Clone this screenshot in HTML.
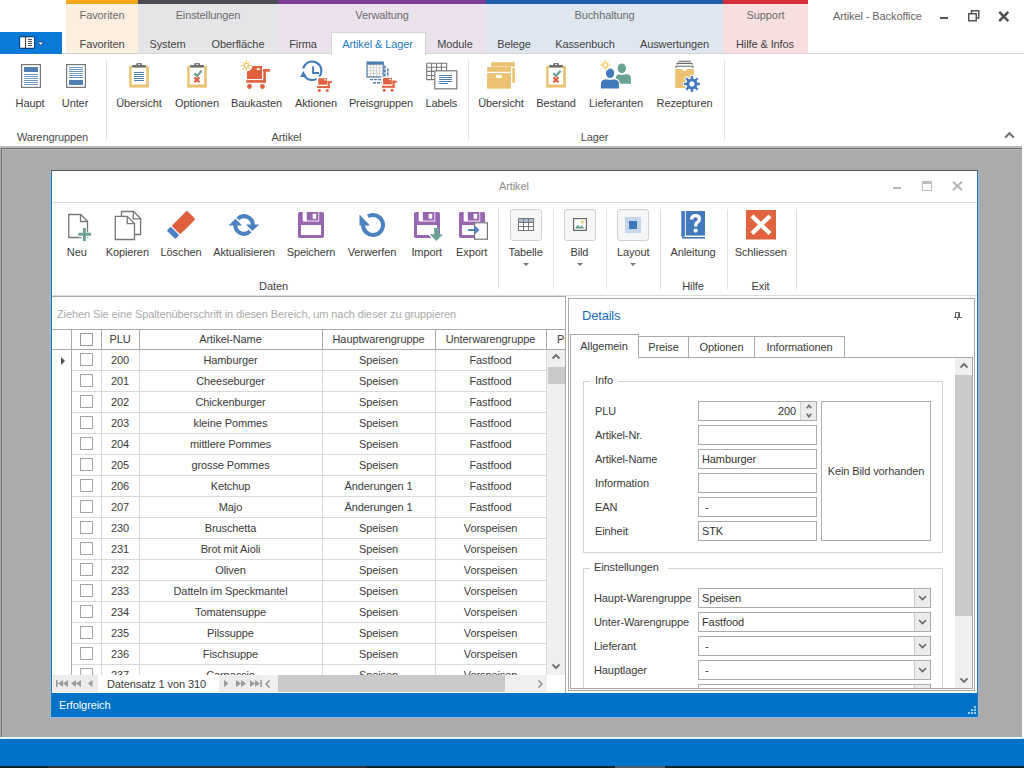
<!DOCTYPE html>
<html><head><meta charset="utf-8"><style>
html,body{margin:0;padding:0;}
body{width:1024px;height:768px;overflow:hidden;position:relative;background:#fff;font-family:"Liberation Sans",sans-serif;font-size:11px;color:#3b3b3b;}
.t{position:absolute;white-space:nowrap;line-height:13px;letter-spacing:-0.1px;}
.b{position:absolute;box-sizing:border-box;}
svg.b{overflow:visible;}
</style></head><body>
<div class="b" style="left:66px;top:0px;width:72px;height:54px;background:#fcefdf"></div>
<div class="b" style="left:66px;top:0px;width:72px;height:4px;background:#f5a41c"></div>
<div class="t" style="left:22.0px;width:160px;top:9px;text-align:center;color:#6b6b6b;">Favoriten</div>
<div class="b" style="left:138px;top:0px;width:140px;height:54px;background:#e5e5e7"></div>
<div class="b" style="left:138px;top:0px;width:140px;height:4px;background:#4a4a54"></div>
<div class="t" style="left:128.0px;width:160px;top:9px;text-align:center;color:#6b6b6b;">Einstellungen</div>
<div class="b" style="left:278px;top:0px;width:208px;height:54px;background:#ece2ee"></div>
<div class="b" style="left:278px;top:0px;width:208px;height:4px;background:#7c3d95"></div>
<div class="t" style="left:302.0px;width:160px;top:9px;text-align:center;color:#6b6b6b;">Verwaltung</div>
<div class="b" style="left:486px;top:0px;width:237px;height:54px;background:#dee7f0"></div>
<div class="b" style="left:486px;top:0px;width:237px;height:4px;background:#1e5ea8"></div>
<div class="t" style="left:524.5px;width:160px;top:9px;text-align:center;color:#6b6b6b;">Buchhaltung</div>
<div class="b" style="left:723px;top:0px;width:85px;height:54px;background:#f7dfdf"></div>
<div class="b" style="left:723px;top:0px;width:85px;height:4px;background:#d12f3a"></div>
<div class="t" style="left:685.5px;width:160px;top:9px;text-align:center;color:#6b6b6b;">Support</div>
<div class="b" style="left:0px;top:53px;width:1024px;height:1px;background:#d4d4d4"></div>
<div class="b" style="left:0px;top:32px;width:62px;height:22px;background:#0b7ad8"></div>
<svg class="b" style="left:19px;top:36px" width="26" height="14" viewBox="0 0 26 14"><rect x="0.6" y="0.6" width="15" height="11.8" rx="1.5" fill="#fff" stroke="#0b3f80" stroke-width="1.1"/><path d="M6.5 1V12" stroke="#444" stroke-width="1.1"/><path d="M9 3.4h4M9 5.4h4M9 7.4h4M9 9.4h4" stroke="#444" stroke-width="1"/><path d="M18.6 5.9h6.2l-3.1 3.7z" fill="#fff" stroke="#0b3f80" stroke-width="0.9"/></svg>
<div class="b" style="left:331px;top:32px;width:95px;height:23px;background:#fff;border:1px solid #d4d4d4;border-bottom:none"></div>
<div class="t" style="left:22.0px;width:160px;top:38px;text-align:center;color:#444;">Favoriten</div>
<div class="t" style="left:87.5px;width:160px;top:38px;text-align:center;color:#444;">System</div>
<div class="t" style="left:158.0px;width:160px;top:38px;text-align:center;color:#444;">Oberfläche</div>
<div class="t" style="left:223.0px;width:160px;top:38px;text-align:center;color:#444;">Firma</div>
<div class="t" style="left:297.5px;width:160px;top:38px;text-align:center;color:#1d78c1;">Artikel &amp; Lager</div>
<div class="t" style="left:375.0px;width:160px;top:38px;text-align:center;color:#444;">Module</div>
<div class="t" style="left:434.0px;width:160px;top:38px;text-align:center;color:#444;">Belege</div>
<div class="t" style="left:505.0px;width:160px;top:38px;text-align:center;color:#444;">Kassenbuch</div>
<div class="t" style="left:594.5px;width:160px;top:38px;text-align:center;color:#444;">Auswertungen</div>
<div class="t" style="left:685.0px;width:160px;top:38px;text-align:center;color:#444;">Hilfe &amp; Infos</div>
<div class="t" style="left:833px;top:10px;color:#666;">Artikel - Backoffice</div>
<div class="b" style="left:940px;top:17px;width:8px;height:2px;background:#555"></div>
<svg class="b" style="left:968px;top:10px" width="12" height="12" viewBox="0 0 12 12"><rect x="0.75" y="3.75" width="7.5" height="7" fill="none" stroke="#555" stroke-width="1.5"/><path d="M3.5 3.5V0.75H10.75V8H8.5" fill="none" stroke="#555" stroke-width="1.5"/></svg>
<svg class="b" style="left:998px;top:11px" width="12" height="11" viewBox="0 0 12 11"><path d="M1.2 0.8L10.3 10.2M10.3 0.8L1.2 10.2" stroke="#4e4e4e" stroke-width="2.4"/></svg>
<div class="b" style="left:106px;top:60px;width:1px;height:80px;background:#e2e2e2"></div>
<div class="b" style="left:468px;top:60px;width:1px;height:80px;background:#e2e2e2"></div>
<div class="b" style="left:724px;top:60px;width:1px;height:80px;background:#e2e2e2"></div>
<div class="t" style="left:-50.0px;width:160px;top:97px;text-align:center;color:#3c3c3c;">Haupt</div>
<div class="t" style="left:-5.0px;width:160px;top:97px;text-align:center;color:#3c3c3c;">Unter</div>
<div class="t" style="left:59.0px;width:160px;top:97px;text-align:center;color:#3c3c3c;">Übersicht</div>
<div class="t" style="left:117.0px;width:160px;top:97px;text-align:center;color:#3c3c3c;">Optionen</div>
<div class="t" style="left:176.5px;width:160px;top:97px;text-align:center;color:#3c3c3c;">Baukasten</div>
<div class="t" style="left:236.0px;width:160px;top:97px;text-align:center;color:#3c3c3c;">Aktionen</div>
<div class="t" style="left:301.0px;width:160px;top:97px;text-align:center;color:#3c3c3c;">Preisgruppen</div>
<div class="t" style="left:361.3px;width:160px;top:97px;text-align:center;color:#3c3c3c;">Labels</div>
<div class="t" style="left:421.0px;width:160px;top:97px;text-align:center;color:#3c3c3c;">Übersicht</div>
<div class="t" style="left:476.0px;width:160px;top:97px;text-align:center;color:#3c3c3c;">Bestand</div>
<div class="t" style="left:536.0px;width:160px;top:97px;text-align:center;color:#3c3c3c;">Lieferanten</div>
<div class="t" style="left:604.5px;width:160px;top:97px;text-align:center;color:#3c3c3c;">Rezepturen</div>
<div class="t" style="left:-27.5px;width:160px;top:131px;text-align:center;color:#4a4a4a;">Warengruppen</div>
<div class="t" style="left:206.5px;width:160px;top:131px;text-align:center;color:#4a4a4a;">Artikel</div>
<div class="t" style="left:514.5px;width:160px;top:131px;text-align:center;color:#4a4a4a;">Lager</div>
<svg class="b" style="left:1004px;top:131px" width="11" height="8" viewBox="0 0 11 8"><path d="M1.2 6.5L5.5 2.2L9.8 6.5" fill="none" stroke="#6e6e6e" stroke-width="2"/></svg>
<div class="b" style="left:0px;top:146px;width:1022px;height:591px;background:#ababab"></div>
<div class="b" style="left:0px;top:146px;width:1022px;height:2px;background:#bababa"></div>
<div class="b" style="left:1px;top:148px;width:1021px;height:1px;background:#6b6b6b"></div>
<div class="b" style="left:1px;top:148px;width:1px;height:589px;background:#6b6b6b"></div>
<div class="b" style="left:2px;top:149px;width:1020px;height:1px;background:#b6b6b6"></div>
<div class="b" style="left:2px;top:149px;width:1px;height:588px;background:#b6b6b6"></div>
<div class="b" style="left:0px;top:737px;width:1024px;height:2px;background:#e8f4fc"></div>
<div class="b" style="left:0px;top:739px;width:1024px;height:27px;background:#0072c8"></div>
<div class="b" style="left:0px;top:766px;width:1024px;height:2px;background:#17212b"></div>
<div class="b" style="left:48px;top:766px;width:318px;height:2px;background:#2c3136"></div>
<div class="b" style="left:615px;top:766px;width:50px;height:2px;background:#4c5b68"></div>
<div class="b" style="left:51px;top:170px;width:927px;height:547px;background:#fff;border:1px solid #2f6fa3;border-top-color:#555"></div>
<div class="b" style="left:50px;top:171px;width:1px;height:547px;background:#8dbde3"></div>
<div class="b" style="left:978px;top:171px;width:1px;height:547px;background:#8dbde3"></div>
<div class="b" style="left:50px;top:717px;width:929px;height:1px;background:#8dbde3"></div>
<div class="t" style="left:499px;top:180px;color:#8c8c8c;">Artikel</div>
<div class="b" style="left:893px;top:187px;width:8px;height:2px;background:#b8b8b8"></div>
<div class="b" style="left:922px;top:181px;width:10px;height:10px;border:1px solid #bdbdbd;border-top-width:3px"></div>
<svg class="b" style="left:952px;top:181px" width="11" height="10" viewBox="0 0 11 10"><path d="M1 0.8L10 9.2M10 0.8L1 9.2" stroke="#b5b5b5" stroke-width="2.1"/></svg>
<div class="b" style="left:52px;top:202px;width:925px;height:1px;background:#dadada"></div>
<div class="b" style="left:498px;top:209px;width:1px;height:80px;background:#e0e0e0"></div>
<div class="b" style="left:553px;top:209px;width:1px;height:80px;background:#e0e0e0"></div>
<div class="b" style="left:606px;top:209px;width:1px;height:80px;background:#e0e0e0"></div>
<div class="b" style="left:660px;top:209px;width:1px;height:80px;background:#e0e0e0"></div>
<div class="b" style="left:727px;top:209px;width:1px;height:80px;background:#e0e0e0"></div>
<div class="b" style="left:796px;top:209px;width:1px;height:80px;background:#e0e0e0"></div>
<div class="t" style="left:-3.200000000000003px;width:160px;top:246px;text-align:center;color:#3c3c3c;">Neu</div>
<div class="t" style="left:47.3px;width:160px;top:246px;text-align:center;color:#3c3c3c;">Kopieren</div>
<div class="t" style="left:101.0px;width:160px;top:246px;text-align:center;color:#3c3c3c;">Löschen</div>
<div class="t" style="left:164.0px;width:160px;top:246px;text-align:center;color:#3c3c3c;">Aktualisieren</div>
<div class="t" style="left:231.0px;width:160px;top:246px;text-align:center;color:#3c3c3c;">Speichern</div>
<div class="t" style="left:292.0px;width:160px;top:246px;text-align:center;color:#3c3c3c;">Verwerfen</div>
<div class="t" style="left:346.7px;width:160px;top:246px;text-align:center;color:#3c3c3c;">Import</div>
<div class="t" style="left:391.7px;width:160px;top:246px;text-align:center;color:#3c3c3c;">Export</div>
<div class="t" style="left:445.6px;width:160px;top:246px;text-align:center;color:#3c3c3c;">Tabelle</div>
<div class="t" style="left:499.4px;width:160px;top:246px;text-align:center;color:#3c3c3c;">Bild</div>
<div class="t" style="left:553.3px;width:160px;top:246px;text-align:center;color:#3c3c3c;">Layout</div>
<div class="t" style="left:613.0px;width:160px;top:246px;text-align:center;color:#3c3c3c;">Anleitung</div>
<div class="t" style="left:680.8px;width:160px;top:246px;text-align:center;color:#3c3c3c;">Schliessen</div>
<div class="t" style="left:193.5px;width:160px;top:280px;text-align:center;color:#3c3c3c;">Daten</div>
<div class="t" style="left:613.0px;width:160px;top:280px;text-align:center;color:#3c3c3c;">Hilfe</div>
<div class="t" style="left:680.5px;width:160px;top:280px;text-align:center;color:#3c3c3c;">Exit</div>
<div class="b" style="left:510px;top:209px;width:32px;height:32px;background:#f6f6f6;border:1px solid #d0d0d0;border-radius:3px"></div>
<div class="b" style="left:564px;top:209px;width:32px;height:32px;background:#f6f6f6;border:1px solid #d0d0d0;border-radius:3px"></div>
<div class="b" style="left:617px;top:209px;width:32px;height:32px;background:#f6f6f6;border:1px solid #d0d0d0;border-radius:3px"></div>
<svg class="b" style="left:522.5px;top:263px" width="6" height="3" viewBox="0 0 6 3"><path d="M0 0h6l-3 3z" fill="#777"/></svg>
<svg class="b" style="left:576.5px;top:263px" width="6" height="3" viewBox="0 0 6 3"><path d="M0 0h6l-3 3z" fill="#777"/></svg>
<svg class="b" style="left:630px;top:263px" width="6" height="3" viewBox="0 0 6 3"><path d="M0 0h6l-3 3z" fill="#777"/></svg>
<div class="b" style="left:52px;top:295px;width:925px;height:1px;background:#dcdcdc"></div>
<div class="b" style="left:52px;top:693px;width:925px;height:24px;background:#0072c8"></div>
<div class="t" style="left:59px;top:699px;color:#fff;">Erfolgreich</div>
<svg class="b" style="left:968px;top:706px" width="8" height="8" viewBox="0 0 8 8"><rect x="6" y="0" width="2" height="2" fill="#9fd3f5"/><rect x="3" y="3" width="2" height="2" fill="#9fd3f5"/><rect x="6" y="3" width="2" height="2" fill="#9fd3f5"/><rect x="0" y="6" width="2" height="2" fill="#9fd3f5"/><rect x="3" y="6" width="2" height="2" fill="#9fd3f5"/><rect x="6" y="6" width="2" height="2" fill="#9fd3f5"/></svg>
<div class="b" style="left:52px;top:296px;width:514px;height:397px;background:#fff"></div>
<div class="b" style="left:52px;top:296px;width:514px;height:1px;background:#a9a9a9"></div>
<div class="b" style="left:565px;top:296px;width:1px;height:397px;background:#a9a9a9"></div>
<div class="t" style="left:57px;top:308px;color:#a9a9a9;">Ziehen Sie eine Spaltenüberschrift in diesen Bereich, um nach dieser zu gruppieren</div>
<div class="b" style="left:52px;top:329px;width:513px;height:1px;background:#a9a9a9"></div>
<div class="b" style="left:52px;top:349px;width:513px;height:1px;background:#a9a9a9"></div>
<div class="b" style="left:71px;top:330px;width:1px;height:19px;background:#a9a9a9"></div>
<div class="b" style="left:101px;top:330px;width:1px;height:19px;background:#a9a9a9"></div>
<div class="b" style="left:139px;top:330px;width:1px;height:19px;background:#a9a9a9"></div>
<div class="b" style="left:322px;top:330px;width:1px;height:19px;background:#a9a9a9"></div>
<div class="b" style="left:435px;top:330px;width:1px;height:19px;background:#a9a9a9"></div>
<div class="b" style="left:546px;top:330px;width:1px;height:19px;background:#a9a9a9"></div>
<div class="t" style="left:40.0px;width:160px;top:333px;text-align:center;">PLU</div>
<div class="t" style="left:150.5px;width:160px;top:333px;text-align:center;">Artikel-Name</div>
<div class="t" style="left:298.5px;width:160px;top:333px;text-align:center;">Hauptwarengruppe</div>
<div class="t" style="left:410.5px;width:160px;top:333px;text-align:center;">Unterwarengruppe</div>
<div class="b" style="left:547px;top:330px;width:18px;height:19px;overflow:hidden"><div class="t" style="left:10px;top:3px">Preis</div></div>
<div class="b" style="left:80px;top:333px;width:13px;height:13px;border:1px solid #989898;background:#fff"></div>
<div class="b" style="left:52px;top:350px;width:495px;height:325px;overflow:hidden">
<div class="b" style="left:19px;top:0px;width:1px;height:325px;background:#a9a9a9"></div>
<div class="b" style="left:20px;top:20px;width:475px;height:1px;background:#d9d9d9"></div>
<div class="b" style="left:49px;top:0px;width:1px;height:21px;background:#d9d9d9"></div>
<div class="b" style="left:87px;top:0px;width:1px;height:21px;background:#d9d9d9"></div>
<div class="b" style="left:270px;top:0px;width:1px;height:21px;background:#d9d9d9"></div>
<div class="b" style="left:383px;top:0px;width:1px;height:21px;background:#d9d9d9"></div>
<div class="b" style="left:494px;top:0px;width:1px;height:21px;background:#d9d9d9"></div>
<div class="b" style="left:28px;top:3px;width:13px;height:13px;border:1px solid #a5a5a5;background:#fff"></div>
<div class="t" style="left:-12.0px;width:160px;top:4px;text-align:center;">200</div>
<div class="t" style="left:98.5px;width:160px;top:4px;text-align:center;">Hamburger</div>
<div class="t" style="left:246.5px;width:160px;top:4px;text-align:center;">Speisen</div>
<div class="t" style="left:358.5px;width:160px;top:4px;text-align:center;">Fastfood</div>
<div class="b" style="left:20px;top:41px;width:475px;height:1px;background:#d9d9d9"></div>
<div class="b" style="left:49px;top:21px;width:1px;height:21px;background:#d9d9d9"></div>
<div class="b" style="left:87px;top:21px;width:1px;height:21px;background:#d9d9d9"></div>
<div class="b" style="left:270px;top:21px;width:1px;height:21px;background:#d9d9d9"></div>
<div class="b" style="left:383px;top:21px;width:1px;height:21px;background:#d9d9d9"></div>
<div class="b" style="left:494px;top:21px;width:1px;height:21px;background:#d9d9d9"></div>
<div class="b" style="left:28px;top:24px;width:13px;height:13px;border:1px solid #a5a5a5;background:#fff"></div>
<div class="t" style="left:-12.0px;width:160px;top:25px;text-align:center;">201</div>
<div class="t" style="left:98.5px;width:160px;top:25px;text-align:center;">Cheeseburger</div>
<div class="t" style="left:246.5px;width:160px;top:25px;text-align:center;">Speisen</div>
<div class="t" style="left:358.5px;width:160px;top:25px;text-align:center;">Fastfood</div>
<div class="b" style="left:20px;top:62px;width:475px;height:1px;background:#d9d9d9"></div>
<div class="b" style="left:49px;top:42px;width:1px;height:21px;background:#d9d9d9"></div>
<div class="b" style="left:87px;top:42px;width:1px;height:21px;background:#d9d9d9"></div>
<div class="b" style="left:270px;top:42px;width:1px;height:21px;background:#d9d9d9"></div>
<div class="b" style="left:383px;top:42px;width:1px;height:21px;background:#d9d9d9"></div>
<div class="b" style="left:494px;top:42px;width:1px;height:21px;background:#d9d9d9"></div>
<div class="b" style="left:28px;top:45px;width:13px;height:13px;border:1px solid #a5a5a5;background:#fff"></div>
<div class="t" style="left:-12.0px;width:160px;top:46px;text-align:center;">202</div>
<div class="t" style="left:98.5px;width:160px;top:46px;text-align:center;">Chickenburger</div>
<div class="t" style="left:246.5px;width:160px;top:46px;text-align:center;">Speisen</div>
<div class="t" style="left:358.5px;width:160px;top:46px;text-align:center;">Fastfood</div>
<div class="b" style="left:20px;top:83px;width:475px;height:1px;background:#d9d9d9"></div>
<div class="b" style="left:49px;top:63px;width:1px;height:21px;background:#d9d9d9"></div>
<div class="b" style="left:87px;top:63px;width:1px;height:21px;background:#d9d9d9"></div>
<div class="b" style="left:270px;top:63px;width:1px;height:21px;background:#d9d9d9"></div>
<div class="b" style="left:383px;top:63px;width:1px;height:21px;background:#d9d9d9"></div>
<div class="b" style="left:494px;top:63px;width:1px;height:21px;background:#d9d9d9"></div>
<div class="b" style="left:28px;top:66px;width:13px;height:13px;border:1px solid #a5a5a5;background:#fff"></div>
<div class="t" style="left:-12.0px;width:160px;top:67px;text-align:center;">203</div>
<div class="t" style="left:98.5px;width:160px;top:67px;text-align:center;">kleine Pommes</div>
<div class="t" style="left:246.5px;width:160px;top:67px;text-align:center;">Speisen</div>
<div class="t" style="left:358.5px;width:160px;top:67px;text-align:center;">Fastfood</div>
<div class="b" style="left:20px;top:104px;width:475px;height:1px;background:#d9d9d9"></div>
<div class="b" style="left:49px;top:84px;width:1px;height:21px;background:#d9d9d9"></div>
<div class="b" style="left:87px;top:84px;width:1px;height:21px;background:#d9d9d9"></div>
<div class="b" style="left:270px;top:84px;width:1px;height:21px;background:#d9d9d9"></div>
<div class="b" style="left:383px;top:84px;width:1px;height:21px;background:#d9d9d9"></div>
<div class="b" style="left:494px;top:84px;width:1px;height:21px;background:#d9d9d9"></div>
<div class="b" style="left:28px;top:87px;width:13px;height:13px;border:1px solid #a5a5a5;background:#fff"></div>
<div class="t" style="left:-12.0px;width:160px;top:88px;text-align:center;">204</div>
<div class="t" style="left:98.5px;width:160px;top:88px;text-align:center;">mittlere Pommes</div>
<div class="t" style="left:246.5px;width:160px;top:88px;text-align:center;">Speisen</div>
<div class="t" style="left:358.5px;width:160px;top:88px;text-align:center;">Fastfood</div>
<div class="b" style="left:20px;top:125px;width:475px;height:1px;background:#d9d9d9"></div>
<div class="b" style="left:49px;top:105px;width:1px;height:21px;background:#d9d9d9"></div>
<div class="b" style="left:87px;top:105px;width:1px;height:21px;background:#d9d9d9"></div>
<div class="b" style="left:270px;top:105px;width:1px;height:21px;background:#d9d9d9"></div>
<div class="b" style="left:383px;top:105px;width:1px;height:21px;background:#d9d9d9"></div>
<div class="b" style="left:494px;top:105px;width:1px;height:21px;background:#d9d9d9"></div>
<div class="b" style="left:28px;top:108px;width:13px;height:13px;border:1px solid #a5a5a5;background:#fff"></div>
<div class="t" style="left:-12.0px;width:160px;top:109px;text-align:center;">205</div>
<div class="t" style="left:98.5px;width:160px;top:109px;text-align:center;">grosse Pommes</div>
<div class="t" style="left:246.5px;width:160px;top:109px;text-align:center;">Speisen</div>
<div class="t" style="left:358.5px;width:160px;top:109px;text-align:center;">Fastfood</div>
<div class="b" style="left:20px;top:146px;width:475px;height:1px;background:#d9d9d9"></div>
<div class="b" style="left:49px;top:126px;width:1px;height:21px;background:#d9d9d9"></div>
<div class="b" style="left:87px;top:126px;width:1px;height:21px;background:#d9d9d9"></div>
<div class="b" style="left:270px;top:126px;width:1px;height:21px;background:#d9d9d9"></div>
<div class="b" style="left:383px;top:126px;width:1px;height:21px;background:#d9d9d9"></div>
<div class="b" style="left:494px;top:126px;width:1px;height:21px;background:#d9d9d9"></div>
<div class="b" style="left:28px;top:129px;width:13px;height:13px;border:1px solid #a5a5a5;background:#fff"></div>
<div class="t" style="left:-12.0px;width:160px;top:130px;text-align:center;">206</div>
<div class="t" style="left:98.5px;width:160px;top:130px;text-align:center;">Ketchup</div>
<div class="t" style="left:246.5px;width:160px;top:130px;text-align:center;">Änderungen 1</div>
<div class="t" style="left:358.5px;width:160px;top:130px;text-align:center;">Fastfood</div>
<div class="b" style="left:20px;top:167px;width:475px;height:1px;background:#d9d9d9"></div>
<div class="b" style="left:49px;top:147px;width:1px;height:21px;background:#d9d9d9"></div>
<div class="b" style="left:87px;top:147px;width:1px;height:21px;background:#d9d9d9"></div>
<div class="b" style="left:270px;top:147px;width:1px;height:21px;background:#d9d9d9"></div>
<div class="b" style="left:383px;top:147px;width:1px;height:21px;background:#d9d9d9"></div>
<div class="b" style="left:494px;top:147px;width:1px;height:21px;background:#d9d9d9"></div>
<div class="b" style="left:28px;top:150px;width:13px;height:13px;border:1px solid #a5a5a5;background:#fff"></div>
<div class="t" style="left:-12.0px;width:160px;top:151px;text-align:center;">207</div>
<div class="t" style="left:98.5px;width:160px;top:151px;text-align:center;">Majo</div>
<div class="t" style="left:246.5px;width:160px;top:151px;text-align:center;">Änderungen 1</div>
<div class="t" style="left:358.5px;width:160px;top:151px;text-align:center;">Fastfood</div>
<div class="b" style="left:20px;top:188px;width:475px;height:1px;background:#d9d9d9"></div>
<div class="b" style="left:49px;top:168px;width:1px;height:21px;background:#d9d9d9"></div>
<div class="b" style="left:87px;top:168px;width:1px;height:21px;background:#d9d9d9"></div>
<div class="b" style="left:270px;top:168px;width:1px;height:21px;background:#d9d9d9"></div>
<div class="b" style="left:383px;top:168px;width:1px;height:21px;background:#d9d9d9"></div>
<div class="b" style="left:494px;top:168px;width:1px;height:21px;background:#d9d9d9"></div>
<div class="b" style="left:28px;top:171px;width:13px;height:13px;border:1px solid #a5a5a5;background:#fff"></div>
<div class="t" style="left:-12.0px;width:160px;top:172px;text-align:center;">230</div>
<div class="t" style="left:98.5px;width:160px;top:172px;text-align:center;">Bruschetta</div>
<div class="t" style="left:246.5px;width:160px;top:172px;text-align:center;">Speisen</div>
<div class="t" style="left:358.5px;width:160px;top:172px;text-align:center;">Vorspeisen</div>
<div class="b" style="left:20px;top:209px;width:475px;height:1px;background:#d9d9d9"></div>
<div class="b" style="left:49px;top:189px;width:1px;height:21px;background:#d9d9d9"></div>
<div class="b" style="left:87px;top:189px;width:1px;height:21px;background:#d9d9d9"></div>
<div class="b" style="left:270px;top:189px;width:1px;height:21px;background:#d9d9d9"></div>
<div class="b" style="left:383px;top:189px;width:1px;height:21px;background:#d9d9d9"></div>
<div class="b" style="left:494px;top:189px;width:1px;height:21px;background:#d9d9d9"></div>
<div class="b" style="left:28px;top:192px;width:13px;height:13px;border:1px solid #a5a5a5;background:#fff"></div>
<div class="t" style="left:-12.0px;width:160px;top:193px;text-align:center;">231</div>
<div class="t" style="left:98.5px;width:160px;top:193px;text-align:center;">Brot mit Aioli</div>
<div class="t" style="left:246.5px;width:160px;top:193px;text-align:center;">Speisen</div>
<div class="t" style="left:358.5px;width:160px;top:193px;text-align:center;">Vorspeisen</div>
<div class="b" style="left:20px;top:230px;width:475px;height:1px;background:#d9d9d9"></div>
<div class="b" style="left:49px;top:210px;width:1px;height:21px;background:#d9d9d9"></div>
<div class="b" style="left:87px;top:210px;width:1px;height:21px;background:#d9d9d9"></div>
<div class="b" style="left:270px;top:210px;width:1px;height:21px;background:#d9d9d9"></div>
<div class="b" style="left:383px;top:210px;width:1px;height:21px;background:#d9d9d9"></div>
<div class="b" style="left:494px;top:210px;width:1px;height:21px;background:#d9d9d9"></div>
<div class="b" style="left:28px;top:213px;width:13px;height:13px;border:1px solid #a5a5a5;background:#fff"></div>
<div class="t" style="left:-12.0px;width:160px;top:214px;text-align:center;">232</div>
<div class="t" style="left:98.5px;width:160px;top:214px;text-align:center;">Oliven</div>
<div class="t" style="left:246.5px;width:160px;top:214px;text-align:center;">Speisen</div>
<div class="t" style="left:358.5px;width:160px;top:214px;text-align:center;">Vorspeisen</div>
<div class="b" style="left:20px;top:251px;width:475px;height:1px;background:#d9d9d9"></div>
<div class="b" style="left:49px;top:231px;width:1px;height:21px;background:#d9d9d9"></div>
<div class="b" style="left:87px;top:231px;width:1px;height:21px;background:#d9d9d9"></div>
<div class="b" style="left:270px;top:231px;width:1px;height:21px;background:#d9d9d9"></div>
<div class="b" style="left:383px;top:231px;width:1px;height:21px;background:#d9d9d9"></div>
<div class="b" style="left:494px;top:231px;width:1px;height:21px;background:#d9d9d9"></div>
<div class="b" style="left:28px;top:234px;width:13px;height:13px;border:1px solid #a5a5a5;background:#fff"></div>
<div class="t" style="left:-12.0px;width:160px;top:235px;text-align:center;">233</div>
<div class="t" style="left:98.5px;width:160px;top:235px;text-align:center;">Datteln im Speckmantel</div>
<div class="t" style="left:246.5px;width:160px;top:235px;text-align:center;">Speisen</div>
<div class="t" style="left:358.5px;width:160px;top:235px;text-align:center;">Vorspeisen</div>
<div class="b" style="left:20px;top:272px;width:475px;height:1px;background:#d9d9d9"></div>
<div class="b" style="left:49px;top:252px;width:1px;height:21px;background:#d9d9d9"></div>
<div class="b" style="left:87px;top:252px;width:1px;height:21px;background:#d9d9d9"></div>
<div class="b" style="left:270px;top:252px;width:1px;height:21px;background:#d9d9d9"></div>
<div class="b" style="left:383px;top:252px;width:1px;height:21px;background:#d9d9d9"></div>
<div class="b" style="left:494px;top:252px;width:1px;height:21px;background:#d9d9d9"></div>
<div class="b" style="left:28px;top:255px;width:13px;height:13px;border:1px solid #a5a5a5;background:#fff"></div>
<div class="t" style="left:-12.0px;width:160px;top:256px;text-align:center;">234</div>
<div class="t" style="left:98.5px;width:160px;top:256px;text-align:center;">Tomatensuppe</div>
<div class="t" style="left:246.5px;width:160px;top:256px;text-align:center;">Speisen</div>
<div class="t" style="left:358.5px;width:160px;top:256px;text-align:center;">Vorspeisen</div>
<div class="b" style="left:20px;top:293px;width:475px;height:1px;background:#d9d9d9"></div>
<div class="b" style="left:49px;top:273px;width:1px;height:21px;background:#d9d9d9"></div>
<div class="b" style="left:87px;top:273px;width:1px;height:21px;background:#d9d9d9"></div>
<div class="b" style="left:270px;top:273px;width:1px;height:21px;background:#d9d9d9"></div>
<div class="b" style="left:383px;top:273px;width:1px;height:21px;background:#d9d9d9"></div>
<div class="b" style="left:494px;top:273px;width:1px;height:21px;background:#d9d9d9"></div>
<div class="b" style="left:28px;top:276px;width:13px;height:13px;border:1px solid #a5a5a5;background:#fff"></div>
<div class="t" style="left:-12.0px;width:160px;top:277px;text-align:center;">235</div>
<div class="t" style="left:98.5px;width:160px;top:277px;text-align:center;">Pilssuppe</div>
<div class="t" style="left:246.5px;width:160px;top:277px;text-align:center;">Speisen</div>
<div class="t" style="left:358.5px;width:160px;top:277px;text-align:center;">Vorspeisen</div>
<div class="b" style="left:20px;top:314px;width:475px;height:1px;background:#d9d9d9"></div>
<div class="b" style="left:49px;top:294px;width:1px;height:21px;background:#d9d9d9"></div>
<div class="b" style="left:87px;top:294px;width:1px;height:21px;background:#d9d9d9"></div>
<div class="b" style="left:270px;top:294px;width:1px;height:21px;background:#d9d9d9"></div>
<div class="b" style="left:383px;top:294px;width:1px;height:21px;background:#d9d9d9"></div>
<div class="b" style="left:494px;top:294px;width:1px;height:21px;background:#d9d9d9"></div>
<div class="b" style="left:28px;top:297px;width:13px;height:13px;border:1px solid #a5a5a5;background:#fff"></div>
<div class="t" style="left:-12.0px;width:160px;top:298px;text-align:center;">236</div>
<div class="t" style="left:98.5px;width:160px;top:298px;text-align:center;">Fischsuppe</div>
<div class="t" style="left:246.5px;width:160px;top:298px;text-align:center;">Speisen</div>
<div class="t" style="left:358.5px;width:160px;top:298px;text-align:center;">Vorspeisen</div>
<div class="b" style="left:20px;top:335px;width:475px;height:1px;background:#d9d9d9"></div>
<div class="b" style="left:49px;top:315px;width:1px;height:21px;background:#d9d9d9"></div>
<div class="b" style="left:87px;top:315px;width:1px;height:21px;background:#d9d9d9"></div>
<div class="b" style="left:270px;top:315px;width:1px;height:21px;background:#d9d9d9"></div>
<div class="b" style="left:383px;top:315px;width:1px;height:21px;background:#d9d9d9"></div>
<div class="b" style="left:494px;top:315px;width:1px;height:21px;background:#d9d9d9"></div>
<div class="b" style="left:28px;top:318px;width:13px;height:13px;border:1px solid #a5a5a5;background:#fff"></div>
<div class="t" style="left:-12.0px;width:160px;top:319px;text-align:center;">237</div>
<div class="t" style="left:98.5px;width:160px;top:319px;text-align:center;">Carpaccio</div>
<div class="t" style="left:246.5px;width:160px;top:319px;text-align:center;">Speisen</div>
<div class="t" style="left:358.5px;width:160px;top:319px;text-align:center;">Vorspeisen</div>
</div>
<svg class="b" style="left:61px;top:357px" width="4" height="8" viewBox="0 0 4 8"><path d="M0 0L4 4L0 8z" fill="#555"/></svg>
<div class="b" style="left:547px;top:350px;width:18px;height:325px;background:#efefef"></div>
<div class="b" style="left:548px;top:367px;width:17px;height:17px;background:#c9c9c9"></div>
<svg class="b" style="left:552px;top:354px" width="8" height="5" viewBox="0 0 8 5"><path d="M0.5 4.5L4 1L7.5 4.5" fill="none" stroke="#6e6e6e" stroke-width="1.8"/></svg>
<svg class="b" style="left:552px;top:664px" width="8" height="5" viewBox="0 0 8 5"><path d="M0.5 0.5L4 4L7.5 0.5" fill="none" stroke="#6e6e6e" stroke-width="1.8"/></svg>
<div class="b" style="left:52px;top:675px;width:46px;height:17px;background:#ececec"></div>
<div class="b" style="left:98px;top:675px;width:121px;height:17px;background:#fff"></div>
<div class="b" style="left:219px;top:675px;width:42px;height:17px;background:#ececec"></div>
<div class="b" style="left:261px;top:675px;width:286px;height:17px;background:#efefef"></div>
<div class="b" style="left:278px;top:675px;width:227px;height:17px;background:#c9c9c9"></div>
<div class="b" style="left:547px;top:675px;width:18px;height:17px;background:#fff"></div>
<div class="t" style="left:107px;top:678px;color:#3c3c3c;">Datensatz 1 von 310</div>
<svg class="b" style="left:56px;top:680px" width="12" height="7" viewBox="0 0 12 7"><path d="M0 0h1.6v7H0z M7 0v7L2 3.5z M12 0v7L7 3.5z" fill="#9a9a9a"/></svg>
<svg class="b" style="left:71px;top:680px" width="12" height="7" viewBox="0 0 12 7"><path d="M5 0v7L0 3.5z M10 0v7L5 3.5z" fill="#9a9a9a"/></svg>
<svg class="b" style="left:88px;top:680px" width="5" height="7" viewBox="0 0 5 7"><path d="M4.5 0v7L0 3.5z" fill="#9a9a9a"/></svg>
<svg class="b" style="left:224px;top:680px" width="5" height="7" viewBox="0 0 5 7"><path d="M0 0v7L4.5 3.5z" fill="#9a9a9a"/></svg>
<svg class="b" style="left:236px;top:680px" width="10" height="7" viewBox="0 0 10 7"><path d="M0 0v7L5 3.5z M5 0v7L10 3.5z" fill="#9a9a9a"/></svg>
<svg class="b" style="left:250px;top:680px" width="12" height="7" viewBox="0 0 12 7"><path d="M0 0v7L5 3.5z M5 0v7L10 3.5z M10.4 0h1.6v7h-1.6z" fill="#9a9a9a"/></svg>
<svg class="b" style="left:265px;top:680px" width="5" height="8" viewBox="0 0 5 8"><path d="M4.5 0.5L1 4L4.5 7.5" fill="none" stroke="#888" stroke-width="1.4"/></svg>
<svg class="b" style="left:538px;top:680px" width="5" height="8" viewBox="0 0 5 8"><path d="M0.5 0.5L4 4L0.5 7.5" fill="none" stroke="#888" stroke-width="1.4"/></svg>
<div class="b" style="left:568px;top:298px;width:407px;height:393px;border:1px solid #a9a9a9;background:#fff"></div>
<div class="t" style="left:582px;top:309px;color:#1b6db8;font-size:13px;letter-spacing:-0.2px">Details</div>
<svg class="b" style="left:954px;top:312px" width="8" height="8" viewBox="0 0 8 8"><path d="M1.5 0.5h4v5h-4z" fill="none" stroke="#666" stroke-width="1"/><path d="M4.5 0.5v5" stroke="#666" stroke-width="1"/><path d="M0 5.5h8" stroke="#666" stroke-width="1"/><path d="M3.5 5.5v2.5" stroke="#666" stroke-width="1"/></svg>
<div class="b" style="left:570px;top:357px;width:403px;height:332px;border:1px solid #a9a9a9;background:#fff"></div>
<div class="b" style="left:638px;top:336px;width:51px;height:22px;border:1px solid #a9a9a9;background:#fff"></div>
<div class="t" style="left:583.5px;width:160px;top:341px;text-align:center;">Preise</div>
<div class="b" style="left:688px;top:336px;width:67px;height:22px;border:1px solid #a9a9a9;background:#fff"></div>
<div class="t" style="left:641.5px;width:160px;top:341px;text-align:center;">Optionen</div>
<div class="b" style="left:754px;top:336px;width:91px;height:22px;border:1px solid #a9a9a9;background:#fff"></div>
<div class="t" style="left:719.5px;width:160px;top:341px;text-align:center;">Informationen</div>
<div class="b" style="left:570px;top:334px;width:69px;height:24px;border:1px solid #a9a9a9;border-bottom:none;background:#fff"></div>
<div class="t" style="left:524.0px;width:160px;top:340px;text-align:center;">Allgemein</div>
<div class="b" style="left:955px;top:358px;width:17px;height:330px;background:#efefef"></div>
<div class="b" style="left:955px;top:375px;width:17px;height:241px;background:#c9c9c9"></div>
<svg class="b" style="left:960px;top:363px" width="8" height="5" viewBox="0 0 8 5"><path d="M0.5 4.5L4 1L7.5 4.5" fill="none" stroke="#6e6e6e" stroke-width="1.8"/></svg>
<svg class="b" style="left:960px;top:678px" width="8" height="5" viewBox="0 0 8 5"><path d="M0.5 0.5L4 4L7.5 0.5" fill="none" stroke="#6e6e6e" stroke-width="1.8"/></svg>
<div class="b" style="left:583px;top:381px;width:360px;height:172px;border:1px solid #d4d4d4"></div>
<div class="b" style="left:590px;top:376px;width:28px;height:10px;background:#fff"></div>
<div class="t" style="left:595px;top:374px;">Info</div>
<div class="t" style="left:595px;top:405px;">PLU</div>
<div class="b" style="left:698px;top:401px;width:119px;height:20px;border:1px solid #ababab;background:#fff"></div>
<div class="t" style="left:596px;width:200px;top:405px;text-align:right;color:#333;">200</div>
<div class="t" style="left:595px;top:429px;">Artikel-Nr.</div>
<div class="b" style="left:698px;top:425px;width:119px;height:20px;border:1px solid #ababab;background:#fff"></div>
<div class="t" style="left:595px;top:453px;">Artikel-Name</div>
<div class="b" style="left:698px;top:449px;width:119px;height:20px;border:1px solid #ababab;background:#fff"></div>
<div class="t" style="left:702px;top:453px;color:#333;">Hamburger</div>
<div class="t" style="left:595px;top:477px;">Information</div>
<div class="b" style="left:698px;top:473px;width:119px;height:20px;border:1px solid #ababab;background:#fff"></div>
<div class="t" style="left:595px;top:501px;">EAN</div>
<div class="b" style="left:698px;top:497px;width:119px;height:20px;border:1px solid #ababab;background:#fff"></div>
<div class="t" style="left:702px;top:501px;color:#333;">&nbsp;-</div>
<div class="t" style="left:595px;top:525px;">Einheit</div>
<div class="b" style="left:698px;top:521px;width:119px;height:20px;border:1px solid #ababab;background:#fff"></div>
<div class="t" style="left:702px;top:525px;color:#333;">STK</div>
<div class="b" style="left:800px;top:402px;width:16px;height:18px;background:#ececec;border-left:1px solid #d0d0d0"></div>
<svg class="b" style="left:806px;top:404px" width="6" height="14" viewBox="0 0 6 14"><path d="M0.8 4.3L3 1.3L5.2 4.3" fill="none" stroke="#6e6e6e" stroke-width="1.6"/><path d="M0.8 9.8L3 12.8L5.2 9.8" fill="none" stroke="#6e6e6e" stroke-width="1.6"/></svg>
<div class="b" style="left:821px;top:401px;width:110px;height:140px;border:1px solid #ababab"></div>
<div class="t" style="left:796.0px;width:160px;top:465px;text-align:center;">Kein Bild vorhanden</div>
<div class="b" style="left:571px;top:358px;width:384px;height:330px;overflow:hidden">
<div class="b" style="left:12px;top:210px;width:360px;height:140px;border:1px solid #d4d4d4"></div>
<div class="b" style="left:19px;top:204px;width:78px;height:12px;background:#fff"></div>
<div class="t" style="left:23px;top:203px;">Einstellungen</div>
<div class="t" style="left:23px;top:234px;">Haupt-Warengruppe</div>
<div class="b" style="left:127px;top:230px;width:233px;height:20px;border:1px solid #ababab;background:#fff"></div>
<div class="t" style="left:131px;top:234px;color:#333;">Speisen</div>
<div class="b" style="left:343px;top:231px;width:16px;height:18px;background:#ececec;border-left:1px solid #c8c8c8"></div>
<svg class="b" style="left:347px;top:237px" width="9" height="6" viewBox="0 0 9 6"><path d="M1 1L4.5 4.5L8 1" fill="none" stroke="#666" stroke-width="1.6"/></svg>
<div class="t" style="left:23px;top:258px;">Unter-Warengruppe</div>
<div class="b" style="left:127px;top:254px;width:233px;height:20px;border:1px solid #ababab;background:#fff"></div>
<div class="t" style="left:131px;top:258px;color:#333;">Fastfood</div>
<div class="b" style="left:343px;top:255px;width:16px;height:18px;background:#ececec;border-left:1px solid #c8c8c8"></div>
<svg class="b" style="left:347px;top:261px" width="9" height="6" viewBox="0 0 9 6"><path d="M1 1L4.5 4.5L8 1" fill="none" stroke="#666" stroke-width="1.6"/></svg>
<div class="t" style="left:23px;top:282px;">Lieferant</div>
<div class="b" style="left:127px;top:278px;width:233px;height:20px;border:1px solid #ababab;background:#fff"></div>
<div class="t" style="left:131px;top:282px;color:#333;">&nbsp;-</div>
<div class="b" style="left:343px;top:279px;width:16px;height:18px;background:#ececec;border-left:1px solid #c8c8c8"></div>
<svg class="b" style="left:347px;top:285px" width="9" height="6" viewBox="0 0 9 6"><path d="M1 1L4.5 4.5L8 1" fill="none" stroke="#666" stroke-width="1.6"/></svg>
<div class="t" style="left:23px;top:306px;">Hauptlager</div>
<div class="b" style="left:127px;top:302px;width:233px;height:20px;border:1px solid #ababab;background:#fff"></div>
<div class="t" style="left:131px;top:306px;color:#333;">&nbsp;-</div>
<div class="b" style="left:343px;top:303px;width:16px;height:18px;background:#ececec;border-left:1px solid #c8c8c8"></div>
<svg class="b" style="left:347px;top:309px" width="9" height="6" viewBox="0 0 9 6"><path d="M1 1L4.5 4.5L8 1" fill="none" stroke="#666" stroke-width="1.6"/></svg>
<div class="b" style="left:127px;top:326px;width:233px;height:20px;border:1px solid #ababab;background:#fff"></div>
<div class="b" style="left:343px;top:327px;width:16px;height:18px;background:#ececec;border-left:1px solid #c8c8c8"></div>
<svg class="b" style="left:347px;top:333px" width="9" height="6" viewBox="0 0 9 6"><path d="M1 1L4.5 4.5L8 1" fill="none" stroke="#666" stroke-width="1.6"/></svg>
</div>
<svg class="b" style="left:21px;top:64px" width="20" height="24" viewBox="0 0 20 24"><rect x="0.6" y="0.6" width="18.8" height="22.8" fill="#fff" stroke="#777" stroke-width="1.2"/><rect x="3" y="3" width="14" height="5" fill="#4f7fb3"/><path d="M3 10.5h14M3 12.5h14M3 14.5h14M3 16.5h14M3 18.5h14M3 20.5h14" stroke="#4f7fb3" stroke-width="0.9" opacity="0.9"/></svg>
<svg class="b" style="left:66px;top:64px" width="20" height="24" viewBox="0 0 20 24"><rect x="0.6" y="0.6" width="18.8" height="22.8" fill="#fff" stroke="#777" stroke-width="1.2"/><rect x="3" y="16" width="14" height="5" fill="#4f7fb3"/><path d="M3 3.5h14M3 5.5h14M3 7.5h14M3 9.5h14M3 11.5h14M3 13.5h14" stroke="#4f7fb3" stroke-width="0.9" opacity="0.9"/></svg>
<svg class="b" style="left:129px;top:63px" width="20" height="25" viewBox="0 0 20 25"><rect x="0.2" y="3" width="19.7" height="21.6" fill="#ebc172"/><rect x="2.6" y="4.5" width="14.6" height="17" fill="#fff"/><rect x="3" y="2" width="14" height="2.6" rx="1" fill="#6e6e6e"/><rect x="7.3" y="0" width="5.7" height="2.6" rx="1.2" fill="#6e6e6e"/><rect x="9" y="0.8" width="2.3" height="1" fill="#fff"/><path d="M5 9.5h10M5 11.5h10M5 13.5h10M5 15.5h10M5 17.5h10" stroke="#4f7fb3" stroke-width="1.1"/></svg>
<svg class="b" style="left:187px;top:63px" width="20" height="25" viewBox="0 0 20 25"><rect x="0.2" y="3" width="19.7" height="21.6" fill="#ebc172"/><rect x="2.6" y="4.5" width="14.6" height="17" fill="#fff"/><rect x="3" y="2" width="14" height="2.6" rx="1" fill="#6e6e6e"/><rect x="7.3" y="0" width="5.7" height="2.6" rx="1.2" fill="#6e6e6e"/><rect x="9" y="0.8" width="2.3" height="1" fill="#fff"/><path d="M7.3 10.3L10.1 12.9L14.6 7.8" fill="none" stroke="#6aa295" stroke-width="2.3"/><path d="M7.4 14.2L12.4 19.2M12.4 14.2L7.4 19.2" stroke="#e0603d" stroke-width="2.2"/><circle cx="9.9" cy="16.7" r="1.6" fill="#e0603d"/></svg>
<svg class="b" style="left:546px;top:63px" width="20" height="25" viewBox="0 0 20 25"><rect x="0.2" y="3" width="19.7" height="21.6" fill="#ebc172"/><rect x="2.6" y="4.5" width="14.6" height="17" fill="#fff"/><rect x="3" y="2" width="14" height="2.6" rx="1" fill="#6e6e6e"/><rect x="7.3" y="0" width="5.7" height="2.6" rx="1.2" fill="#6e6e6e"/><rect x="9" y="0.8" width="2.3" height="1" fill="#fff"/><path d="M7.3 10.3L10.1 12.9L14.6 7.8" fill="none" stroke="#6aa295" stroke-width="2.3"/><path d="M7.4 14.2L12.4 19.2M12.4 14.2L7.4 19.2" stroke="#e0603d" stroke-width="2.2"/><circle cx="9.9" cy="16.7" r="1.6" fill="#e0603d"/></svg>
<svg class="b" style="left:238px;top:56px" width="36" height="36" viewBox="0 0 36 36"><path d="M9 10.5h5v-0.5h10v13H9z" fill="#e0603d"/><rect x="18.8" y="12.3" width="3" height="1.8" fill="#fff"/><rect x="8.2" y="24.1" width="19.7" height="2.6" fill="#e0603d"/><rect x="25.3" y="13.1" width="2.6" height="13.6" fill="#e0603d"/><rect x="25.3" y="13.1" width="6.6" height="2.6" fill="#e0603d"/><circle cx="11.5" cy="30.5" r="2.4" fill="#e0603d"/><circle cx="24.4" cy="30.5" r="2.4" fill="#e0603d"/><circle cx="8.4" cy="9.4" r="6" fill="#fff"/><path d="M10.00 9.40L13.60 9.40M9.53 10.53L12.08 13.08M8.40 11.00L8.40 14.60M7.27 10.53L4.72 13.08M6.80 9.40L3.20 9.40M7.27 8.27L4.72 5.72M8.40 7.80L8.40 4.20M9.53 8.27L12.08 5.72" stroke="#f0c24e" stroke-width="1"/><circle cx="8.4" cy="9.4" r="2.2" fill="#fff" stroke="#f0c24e" stroke-width="1"/></svg>
<svg class="b" style="left:296px;top:58px" width="40" height="36" viewBox="0 0 40 36"><path d="M7.1 10.5A9.3 9.3 0 1 1 8.9 18.7" fill="none" stroke="#4279bd" stroke-width="2"/><path d="M4.2 18.9L7.4 13.1L10.8 18.9z" fill="#4279bd"/><path d="M17.1 8.2V15H23" fill="none" stroke="#4279bd" stroke-width="1.9"/><rect x="20.5" y="18.5" width="16" height="16" fill="#fff"/><rect x="22.3" y="20.2" width="8.7" height="6.5" fill="#e0603d"/><rect x="28.1" y="21.2" width="2" height="1.2" fill="#fff"/><rect x="21.1" y="28.1" width="12.7" height="2" fill="#e0603d"/><rect x="31.6" y="23.0" width="2.2" height="7.1" fill="#e0603d"/><rect x="31.6" y="23.0" width="4.3" height="2" fill="#e0603d"/><circle cx="23.400000000000002" cy="32.6" r="1.5" fill="#e0603d"/><circle cx="31.3" cy="32.6" r="1.5" fill="#e0603d"/></svg>
<svg class="b" style="left:362px;top:58px" width="40" height="36" viewBox="0 0 40 36"><rect x="5" y="4" width="16.2" height="15" fill="#d0d0d0" stroke="#4f7fb3" stroke-width="1.2"/><rect x="5" y="4" width="16.2" height="2.6" fill="#4f7fb3"/><rect x="5.90" y="7.40" width="2.1" height="2" fill="#fff"/><rect x="8.95" y="7.40" width="2.1" height="2" fill="#fff"/><rect x="12.00" y="7.40" width="2.1" height="2" fill="#fff"/><rect x="15.05" y="7.40" width="2.1" height="2" fill="#fff"/><rect x="18.10" y="7.40" width="2.1" height="2" fill="#fff"/><rect x="5.90" y="10.30" width="2.1" height="2" fill="#fff"/><rect x="8.95" y="10.30" width="2.1" height="2" fill="#fff"/><rect x="12.00" y="10.30" width="2.1" height="2" fill="#fff"/><rect x="15.05" y="10.30" width="2.1" height="2" fill="#fff"/><rect x="18.10" y="10.30" width="2.1" height="2" fill="#fff"/><rect x="5.90" y="13.20" width="2.1" height="2" fill="#fff"/><rect x="8.95" y="13.20" width="2.1" height="2" fill="#fff"/><rect x="12.00" y="13.20" width="2.1" height="2" fill="#fff"/><rect x="15.05" y="13.20" width="2.1" height="2" fill="#fff"/><rect x="18.10" y="13.20" width="2.1" height="2" fill="#fff"/><rect x="5.90" y="16.10" width="2.1" height="2" fill="#fff"/><rect x="8.95" y="16.10" width="2.1" height="2" fill="#fff"/><rect x="12.00" y="16.10" width="2.1" height="2" fill="#fff"/><rect x="15.05" y="16.10" width="2.1" height="2" fill="#fff"/><rect x="18.10" y="16.10" width="2.1" height="2" fill="#fff"/><path d="M22.8 7.5V20.5M25.8 10.5V20.5" stroke="#4f7fb3" stroke-width="1.6" stroke-dasharray="3 1"/><path d="M8 21.6H20M11 24.8H20" stroke="#4f7fb3" stroke-width="1.4" stroke-dasharray="3 1"/><rect x="19.5" y="18.5" width="18" height="17" fill="#fff"/><rect x="21.1" y="19.9" width="8.7" height="6.5" fill="#e0603d"/><rect x="26.900000000000002" y="20.9" width="2" height="1.2" fill="#fff"/><rect x="19.900000000000002" y="27.799999999999997" width="12.7" height="2" fill="#e0603d"/><rect x="30.400000000000002" y="22.7" width="2.2" height="7.1" fill="#e0603d"/><rect x="30.400000000000002" y="22.7" width="4.3" height="2" fill="#e0603d"/><circle cx="22.200000000000003" cy="32.3" r="1.5" fill="#e0603d"/><circle cx="30.1" cy="32.3" r="1.5" fill="#e0603d"/></svg>
<svg class="b" style="left:422px;top:58px" width="40" height="36" viewBox="0 0 40 36"><path d="M4.7 5.2h20.4M4.7 9.3h20.4M4.7 13.4h7.5M4.7 17.5h7.5M4.7 21.6h7.5M4.7 5.2V21.6M9.6 5.2V21.6M14.5 5.2v7.5M19.4 5.2v7.5M24.6 5.2v7.5" fill="none" stroke="#777" stroke-width="1.1"/><rect x="12.8" y="12.8" width="22" height="18" fill="#fff" stroke="#777" stroke-width="1.2"/><path d="M17 17.5h13M17 19.5h13M17 21.5h13M17 23.5h13M17 25.5h9" stroke="#4f7fb3" stroke-width="1.1"/></svg>
<svg class="b" style="left:482px;top:56px" width="40" height="36" viewBox="0 0 40 36"><rect x="9.2" y="6.2" width="23.8" height="4.4" fill="#ebc172"/><rect x="30.3" y="12" width="2.7" height="14.8" fill="#ebc172"/><rect x="5.1" y="11" width="23.9" height="4.8" fill="#ebc172"/><rect x="5.1" y="17.1" width="23.9" height="15.6" fill="#ebc172"/><rect x="13.9" y="18.9" width="6.1" height="3.1" fill="#fff"/></svg>
<svg class="b" style="left:594px;top:56px" width="40" height="36" viewBox="0 0 40 36"><path d="M21.7 27.7V22.5Q21.7 18.3 26 18.3H32.6Q36.9 18.3 36.9 22.5V27.7z" fill="#6aa295"/><ellipse cx="27.8" cy="12.4" rx="5" ry="5.6" fill="#6aa295" stroke="#fff" stroke-width="1.6"/><path d="M5.9 33.4V28Q5.9 22.6 11.5 22.6H20.3Q26 22.6 26 28V33.4z" fill="#fff"/><path d="M6.9 32.6V28Q6.9 23.4 11.5 23.4H20.3Q25 23.4 25 28V32.6z" fill="#4279bd"/><ellipse cx="16.1" cy="17.3" rx="4.9" ry="5.6" fill="#4279bd" stroke="#fff" stroke-width="1.6"/><circle cx="11.3" cy="9.1" r="5.6" fill="#fff"/><path d="M12.90 9.10L16.30 9.10M12.43 10.23L14.84 12.64M11.30 10.70L11.30 14.10M10.17 10.23L7.76 12.64M9.70 9.10L6.30 9.10M10.17 7.97L7.76 5.56M11.30 7.50L11.30 4.10M12.43 7.97L14.84 5.56" stroke="#f0c24e" stroke-width="1"/><circle cx="11.3" cy="9.1" r="2.2" fill="#fff" stroke="#f0c24e" stroke-width="1"/></svg>
<svg class="b" style="left:670px;top:56px" width="36" height="36" viewBox="0 0 36 36"><path d="M8.2 5.3H20.8M7.1 8.6V7.4H22V8.6M6 12V10.3H23V12" fill="none" stroke="#6a6a6a" stroke-width="1.1"/><path d="M5.2 12.9H12.5Q13 15.2 14.6 15.2Q16.2 15.2 16.7 12.9H23.9V31.9H5.2z" fill="#ebc172"/><circle cx="21.9" cy="27.9" r="6.8" fill="#fff"/><rect x="20.6" y="19.6" width="2.6" height="4" fill="#fff" stroke="#fff" stroke-width="1.4" transform="rotate(0 21.9 27.9)"/><rect x="20.6" y="19.6" width="2.6" height="4" fill="#fff" stroke="#fff" stroke-width="1.4" transform="rotate(45 21.9 27.9)"/><rect x="20.6" y="19.6" width="2.6" height="4" fill="#fff" stroke="#fff" stroke-width="1.4" transform="rotate(90 21.9 27.9)"/><rect x="20.6" y="19.6" width="2.6" height="4" fill="#fff" stroke="#fff" stroke-width="1.4" transform="rotate(135 21.9 27.9)"/><rect x="20.6" y="19.6" width="2.6" height="4" fill="#fff" stroke="#fff" stroke-width="1.4" transform="rotate(180 21.9 27.9)"/><rect x="20.6" y="19.6" width="2.6" height="4" fill="#fff" stroke="#fff" stroke-width="1.4" transform="rotate(225 21.9 27.9)"/><rect x="20.6" y="19.6" width="2.6" height="4" fill="#fff" stroke="#fff" stroke-width="1.4" transform="rotate(270 21.9 27.9)"/><rect x="20.6" y="19.6" width="2.6" height="4" fill="#fff" stroke="#fff" stroke-width="1.4" transform="rotate(315 21.9 27.9)"/><rect x="20.7" y="19.9" width="2.4" height="4" fill="#4279bd" transform="rotate(0 21.9 27.9)"/><rect x="20.7" y="19.9" width="2.4" height="4" fill="#4279bd" transform="rotate(45 21.9 27.9)"/><rect x="20.7" y="19.9" width="2.4" height="4" fill="#4279bd" transform="rotate(90 21.9 27.9)"/><rect x="20.7" y="19.9" width="2.4" height="4" fill="#4279bd" transform="rotate(135 21.9 27.9)"/><rect x="20.7" y="19.9" width="2.4" height="4" fill="#4279bd" transform="rotate(180 21.9 27.9)"/><rect x="20.7" y="19.9" width="2.4" height="4" fill="#4279bd" transform="rotate(225 21.9 27.9)"/><rect x="20.7" y="19.9" width="2.4" height="4" fill="#4279bd" transform="rotate(270 21.9 27.9)"/><rect x="20.7" y="19.9" width="2.4" height="4" fill="#4279bd" transform="rotate(315 21.9 27.9)"/><circle cx="21.9" cy="27.9" r="5.5" fill="#4279bd"/><circle cx="21.9" cy="27.9" r="2.6" fill="#fff"/></svg>
<svg class="b" style="left:66px;top:212px" width="28" height="32" viewBox="0 0 28 32"><path d="M2.7 2.5H14.7L21.5 9.3V25.5H2.7z" fill="#fff" stroke="#777" stroke-width="1.3"/><path d="M14.5 2.5V9.5H21.5" fill="none" stroke="#777" stroke-width="1.3"/><path d="M13 22.8H24.5M18.5 16.5V28.8" stroke="#fff" stroke-width="5"/><path d="M12.3 22.3H25M18.4 16V29" stroke="#6aa295" stroke-width="3"/></svg>
<svg class="b" style="left:112px;top:208px" width="32" height="34" viewBox="0 0 32 34"><path d="M9.5 3.5H21.5L28.6 10.6V26.5H9.5z" fill="#fff" stroke="#777" stroke-width="1.3"/><path d="M21.3 3.5V10.8H28.6" fill="none" stroke="#777" stroke-width="1.3"/><path d="M3.3 8.3H15.3L22.5 15.5V31.5H3.3z" fill="#fff" stroke="#777" stroke-width="1.3"/><path d="M15.2 8.3V15.6H22.5" fill="none" stroke="#777" stroke-width="1.3"/></svg>
<svg class="b" style="left:164px;top:206px" width="36" height="36" viewBox="0 0 36 36"><g transform="translate(17,19) rotate(-45)"><rect x="-7.2" y="-6.1" width="21.6" height="12.2" rx="1.6" fill="#e0603d"/><rect x="-14" y="-6.1" width="5.6" height="12.2" rx="1.2" fill="#4a82c2"/></g></svg>
<svg class="b" style="left:224px;top:208px" width="40" height="34" viewBox="0 0 40 34"><path d="M13.8 10.8A8.8 8.8 0 0 1 28.8 17" fill="none" stroke="#4a82c2" stroke-width="4"/><path d="M22 16.4H35.2L28.4 23z" fill="#4a82c2"/><path d="M11.2 17A8.8 8.8 0 0 0 26.2 23.2" fill="none" stroke="#4a82c2" stroke-width="4"/><path d="M4.6 17.5H18.1L11.4 10.8z" fill="#4a82c2"/></svg>
<svg class="b" style="left:298px;top:212px" width="26" height="26" viewBox="0 0 26 26"><rect x="0" y="0" width="26" height="26" rx="1.8" fill="#9866b0"/><rect x="4.7" y="0" width="16.5" height="9.5" fill="#fff"/><rect x="8.8" y="0" width="11.6" height="8.6" fill="#9866b0"/><rect x="14.7" y="1.8" width="3.5" height="5" fill="#fff"/><rect x="3" y="13" width="20" height="10" fill="#fff"/></svg>
<svg class="b" style="left:356px;top:208px" width="34" height="34" viewBox="0 0 34 34"><path d="M7 17A10 10 0 1 0 12 8.3" fill="none" stroke="#4a82c2" stroke-width="4"/><path d="M3.5 6.5V17.4H14z" fill="#4a82c2"/></svg>
<svg class="b" style="left:414px;top:212px" width="30" height="30" viewBox="0 0 30 30"><rect x="0" y="0" width="26" height="26" rx="1.8" fill="#9866b0"/><rect x="4.7" y="0" width="16.5" height="9.5" fill="#fff"/><rect x="8.8" y="0" width="11.6" height="8.6" fill="#9866b0"/><rect x="14.7" y="1.8" width="3.5" height="5" fill="#fff"/><rect x="3" y="13" width="20" height="10" fill="#fff"/><path d="M20.1 16V24.5" stroke="#fff" stroke-width="7"/><path d="M14 22.2H29.5L21.8 31z" fill="#fff"/><rect x="20.1" y="16" width="5" height="7" fill="#6aa295"/><path d="M15.7 22.2H28.9L22.4 28.9z" fill="#6aa295"/></svg>
<svg class="b" style="left:459px;top:212px" width="30" height="30" viewBox="0 0 30 30"><rect x="0" y="0" width="26" height="26" rx="1.8" fill="#9866b0"/><rect x="4.7" y="0" width="16.5" height="9.5" fill="#fff"/><rect x="8.8" y="0" width="11.6" height="8.6" fill="#9866b0"/><rect x="14.7" y="1.8" width="3.5" height="5" fill="#fff"/><rect x="3" y="13" width="20" height="10" fill="#fff"/><rect x="15" y="10.2" width="14" height="17.4" fill="#fff"/><rect x="15.6" y="10.8" width="12.8" height="16.4" fill="#fff" stroke="#777" stroke-width="1.2"/><path d="M9.2 18H17.5" stroke="#4a82c2" stroke-width="2"/><path d="M15.5 14.8L19 18L15.5 21.2" fill="none" stroke="#4a82c2" stroke-width="2"/></svg>
<svg class="b" style="left:518px;top:218px" width="16" height="13" viewBox="0 0 16 13"><rect x="0.5" y="0.5" width="15" height="12" fill="#fff" stroke="#777" stroke-width="1"/><rect x="1" y="1" width="14" height="3" fill="#a9bdd3"/><path d="M0.5 4.5H15.5M0.5 8.5H15.5M5.5 0.5V12.5M10.5 0.5V12.5" stroke="#777" stroke-width="1"/></svg>
<svg class="b" style="left:573px;top:218px" width="14" height="13" viewBox="0 0 14 13"><rect x="0.6" y="0.6" width="12.8" height="11.8" fill="#fff" stroke="#666" stroke-width="1.2"/><path d="M2 10.5L4.5 6.8L6.8 9L8.5 7.5L11.8 10.5z" fill="#6aa295"/><circle cx="9.4" cy="3.9" r="1.5" fill="#e9c56b"/></svg>
<div class="b" style="left:625px;top:217px;width:16px;height:16px;background:#c6d6ea"></div>
<div class="b" style="left:629px;top:221px;width:8px;height:8px;background:#3b78b8"></div>
<svg class="b" style="left:681px;top:210px" width="25" height="30" viewBox="0 0 25 30"><rect x="0.3" y="1" width="3.6" height="25.8" rx="1" fill="#4279bd"/><rect x="4.8" y="1" width="19.2" height="24.6" fill="#4279bd"/><path d="M1 27.8H24" stroke="#4279bd" stroke-width="1.6"/><path d="M10.6 9.6Q10.6 5.6 14.5 5.6Q18.4 5.6 18.4 9Q18.4 11 16.5 12.2Q14.7 13.3 14.7 15.5V16.6" fill="none" stroke="#fff" stroke-width="3.3"/><circle cx="14.6" cy="20.6" r="2.1" fill="#fff"/></svg>
<svg class="b" style="left:746px;top:210px" width="30" height="30" viewBox="0 0 30 30"><rect x="0" y="0" width="30" height="29.5" fill="#e0623e"/><path d="M6 6L24 23.5M24 6L6 23.5" stroke="#fff" stroke-width="4.3"/></svg>
</body></html>
